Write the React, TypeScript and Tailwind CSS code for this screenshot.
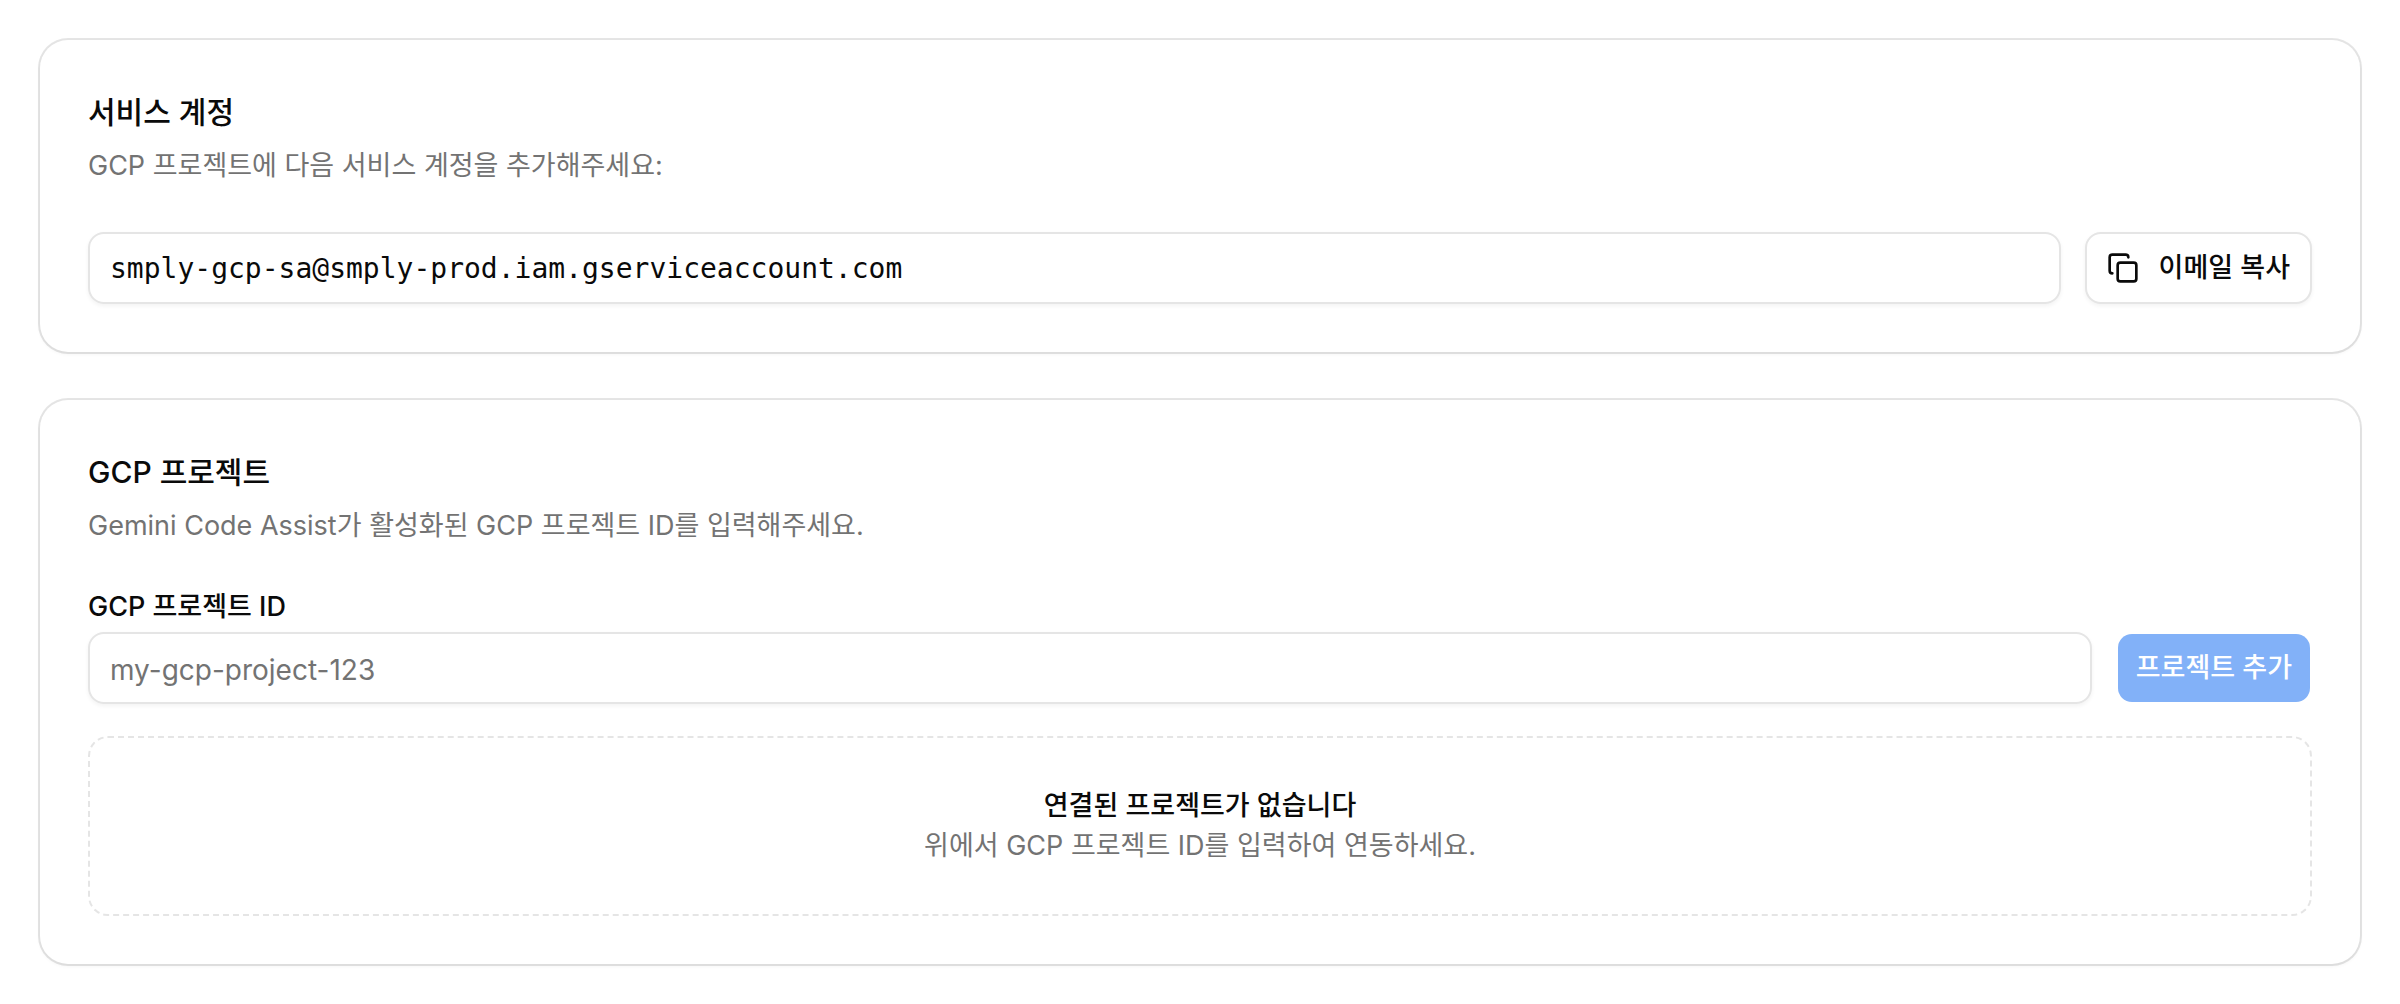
import { useState, type ReactNode } from 'react'
import { Copy } from 'lucide-react'

const SERVICE_ACCOUNT = 'smply-gcp-sa@smply-prod.iam.gserviceaccount.com'

interface SectionCardProps {
    title: string
    description: string
    children: ReactNode
}

function SectionCard({ title, description, children }: SectionCardProps) {
    return (
        <section className="rounded-[28px] bg-white p-12 ring-2 ring-black/10 shadow-[0_2px_4px_rgba(0,0,0,0.05)]">
            <h2 className="text-[30px] leading-12 font-medium">{title}</h2>
            <p className="mt-2 text-[27px] leading-11 text-[#737373]">{description}</p>
            <div className="mt-11">{children}</div>
        </section>
    )
}

export default function App() {
    const [projectId, setProjectId] = useState('')

    const copyEmail = () => {
        navigator.clipboard?.writeText(SERVICE_ACCOUNT)
    }

    return (
        <main className="flex flex-col gap-12 bg-white p-10 font-['Inter','Noto_Sans_CJK_KR',sans-serif] text-[#0a0a0a]">
            <SectionCard title="서비스 계정" description="GCP 프로젝트에 다음 서비스 계정을 추가해주세요:">
                <div className="flex gap-6">
                    <input
                        readOnly
                        aria-label="서비스 계정 이메일"
                        value={SERVICE_ACCOUNT}
                        className="h-18 min-w-0 flex-1 rounded-2xl border-2 border-[#e5e5e5] px-5 font-['DejaVu_Sans_Mono',monospace] text-[28px] shadow-[0_2px_4px_rgba(0,0,0,0.05)] outline-none"
                    />
                    <button
                        type="button"
                        onClick={copyEmail}
                        className="flex h-18 shrink-0 items-center gap-5 rounded-2xl border-2 border-[#e5e5e5] bg-white px-5 text-[27px] font-medium shadow-[0_2px_4px_rgba(0,0,0,0.05)]"
                    >
                        <Copy className="size-8" />
                        이메일 복사
                    </button>
                </div>
            </SectionCard>

            <SectionCard title="GCP 프로젝트" description="Gemini Code Assist가 활성화된 GCP 프로젝트 ID를 입력해주세요.">
                <form className="flex items-end gap-6" onSubmit={(e) => e.preventDefault()}>
                    <div className="flex min-w-0 flex-1 flex-col gap-[10px]">
                        <label htmlFor="project-id" className="text-[27px] leading-[30px] font-medium">
                            GCP 프로젝트 ID
                        </label>
                        <input
                            id="project-id"
                            value={projectId}
                            onChange={(e) => setProjectId(e.target.value)}
                            placeholder="my-gcp-project-123"
                            className="h-18 w-full rounded-2xl border-2 border-[#e5e5e5] px-5 pt-1 text-[28px] shadow-[0_2px_4px_rgba(0,0,0,0.05)] outline-none placeholder:text-[#737373]"
                        />
                    </div>
                    <button
                        type="submit"
                        disabled={!projectId}
                        className="h-18 shrink-0 rounded-2xl border-2 border-transparent bg-[#2b7fff] bg-clip-padding px-[18px] text-[27px] font-medium text-white disabled:bg-[#82b1f8]"
                    >
                        프로젝트 추가
                    </button>
                </form>

                {/* Empty state */}
                <div className="mt-8 rounded-[20px] border-2 border-dashed border-[#e5e5e5] p-12 text-center text-[27px] leading-10">
                    <p className="font-medium">연결된 프로젝트가 없습니다</p>
                    <p className="text-[#737373]">위에서 GCP 프로젝트 ID를 입력하여 연동하세요.</p>
                </div>
            </SectionCard>
        </main>
    )
}
